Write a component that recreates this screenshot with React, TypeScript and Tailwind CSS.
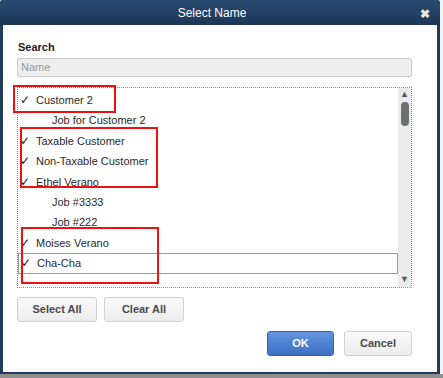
import React from 'react'

const rows = [
    { label: 'Customer 2', checked: true, job: false },
    { label: 'Job for Customer 2', checked: false, job: true },
    { label: 'Taxable Customer', checked: true, job: false },
    { label: 'Non-Taxable Customer', checked: true, job: false },
    { label: 'Ethel Verano', checked: true, job: false },
    { label: 'Job #3333', checked: false, job: true },
    { label: 'Job #222', checked: false, job: true },
    { label: 'Moises Verano', checked: true, job: false },
    { label: 'Cha-Cha', checked: true, job: false, selected: true },
    { label: '', checked: false, job: false },
]

export default function App() {
    return (
        <div className="w-[443px] h-[378px] bg-[#f2f2f2] flex flex-col overflow-hidden font-['Liberation_Sans',Arial,sans-serif]">
            <div className="w-[440px] h-[374px] bg-[#1f3a5c] flex flex-col px-[3px] pb-[2px] rounded-t-[3px] shrink-0">
                {/* title bar */}
                <div className="h-[25px] flex items-center relative bg-gradient-to-b from-[#284a72] to-[#1d3656] -mx-[3px] px-[3px] rounded-t-[3px]">
                    <div className="flex-1 text-center text-white text-[12px] pr-[16px]">Select Name</div>
                    <div className="absolute right-[10px] top-[5px] text-[#e6e6e6] text-[12px] font-bold">✖</div>
                </div>

                <div className="flex-1 bg-white pl-[14px] pr-[25px] pt-[14px] relative">
                    <div className="text-[11px] font-bold text-[#222] leading-[16px] h-[19px] pl-[1px]">Search</div>
                    <div className="h-[19px] bg-[#eeeeee] border border-[#c9c9c9] rounded-[2px] text-[11px] text-[#999] pl-[3px] flex items-center">Name</div>

                    {/* list */}
                    <div className="mt-[10px] h-[201px] border border-dotted border-[#8a8a8a] flex">
                        <div className="flex-1 pt-[2px] overflow-hidden">
                            {rows.map((r, i) => (
                                <div
                                    key={i}
                                    className={`h-[20.4px] flex items-center text-[11px] text-[#2a2a2a] ${r.selected ? 'border border-[#9a9a9a] box-border' : ''}`}
                                >
                                    <span className="w-[18px] pl-[2px] text-[12px] text-[#222]">{r.checked ? '✓' : ''}</span>
                                    <span className={r.job ? 'pl-[16px]' : ''}>{r.label}</span>
                                </div>
                            ))}
                        </div>
                        <div className="w-[13px] bg-[#ebebeb] flex flex-col items-center">
                            <div className="h-[14px] flex items-center justify-center text-[9px] text-[#555]">▲</div>
                            <div className="w-[8px] h-[24px] bg-[#6d6f70] rounded-[4px]"></div>
                            <div className="flex-1"></div>
                            <div className="h-[14px] flex items-center justify-center text-[9px] text-[#555]">▼</div>
                        </div>
                    </div>

                    {/* select/clear */}
                    <div className="flex gap-[7px] mt-[9px]">
                        <button className="w-[80px] h-[25px] bg-gradient-to-b from-[#fafafa] to-[#ececec] border border-[#d0d0d0] rounded-[3px] text-[11px] font-bold text-[#4a4a4a]">Select All</button>
                        <button className="w-[80px] h-[25px] bg-gradient-to-b from-[#fafafa] to-[#ececec] border border-[#d0d0d0] rounded-[3px] text-[11px] font-bold text-[#4a4a4a]">Clear All</button>
                    </div>

                    {/* ok/cancel */}
                    <div className="flex justify-end gap-[10px] mt-[9px]">
                        <button className="w-[67px] h-[25px] bg-gradient-to-b from-[#6296de] to-[#3d6fc4] border border-[#3764b0] rounded-[3px] text-[11px] font-bold text-white">OK</button>
                        <button className="w-[68px] h-[25px] bg-gradient-to-b from-[#fafafa] to-[#ececec] border border-[#d0d0d0] rounded-[3px] text-[11px] font-bold text-[#4a4a4a]">Cancel</button>
                    </div>

                    {/* red annotation boxes */}
                    <div className="absolute left-[10px] top-[60px] w-[103px] h-[28px] border-2 border-[#ee1111]"></div>
                    <div className="absolute left-[17px] top-[102px] w-[138px] h-[61px] border-2 border-[#ee1111]"></div>
                    <div className="absolute left-[18px] top-[202px] w-[138px] h-[57px] border-2 border-[#ee1111]"></div>
                </div>
            </div>
            <div className="flex-1 bg-[#8f8f8f]"></div>
        </div>
    )
}
